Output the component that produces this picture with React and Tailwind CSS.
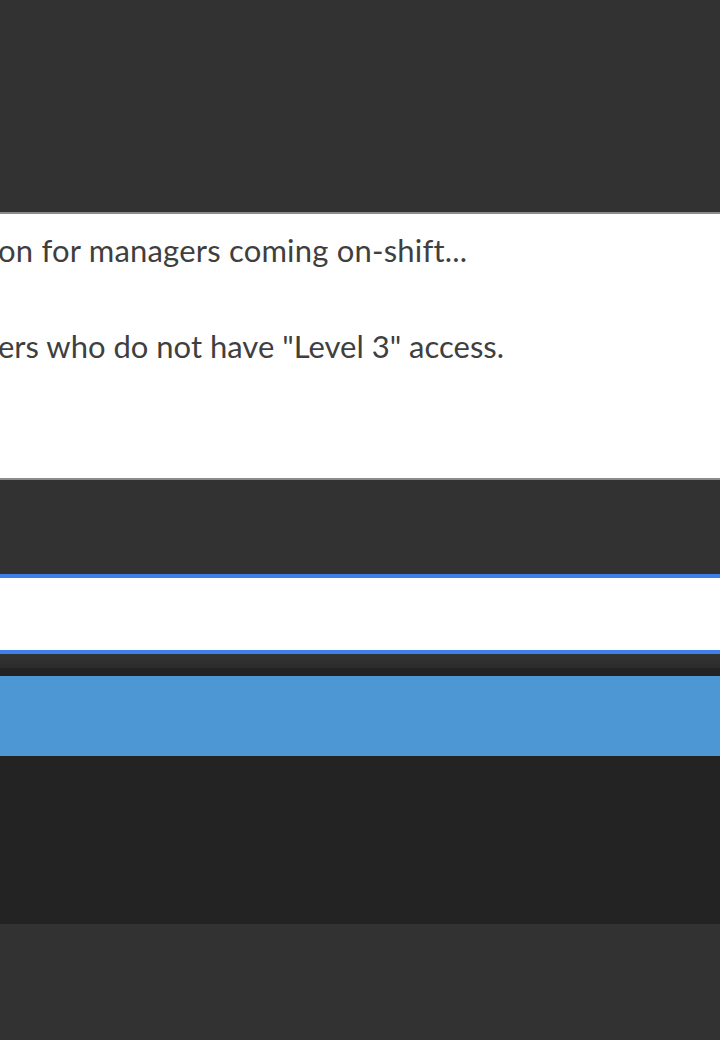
export default function App() {
  return (
    <div className="min-h-[1040px] bg-[#323232] flex flex-col font-['Lato','Open_Sans',sans-serif]">
      <div className="h-[212px]" />

      {/* note body, scrolled to the right */}
      <div className="h-[268px] bg-white border-y-2 border-[#8c8c8c] overflow-hidden">
        <div className="-ml-[2px] pt-[12px] text-[31px] leading-[48px] text-[#3f3f3f] whitespace-nowrap">
          <p className="tracking-[0.2px]">on for managers coming on-shift...</p>
          <p>&nbsp;</p>
          <p>ers who do not have "Level 3" access.</p>
        </div>
      </div>

      <div className="h-[94px]" />

      <div className="h-[80px] bg-white border-y-4 border-[#3d80ea]" />

      <div className="h-[14px] bg-gradient-to-b from-[#333333] to-[#2c2c2c]" />
      <div className="h-[8px] bg-[#232323]" />

      <div className="h-[80px] bg-[#4d97d4]" />

      <div className="h-[168px] bg-[#232323]" />

      <div className="flex-1" />
    </div>
  );
}
